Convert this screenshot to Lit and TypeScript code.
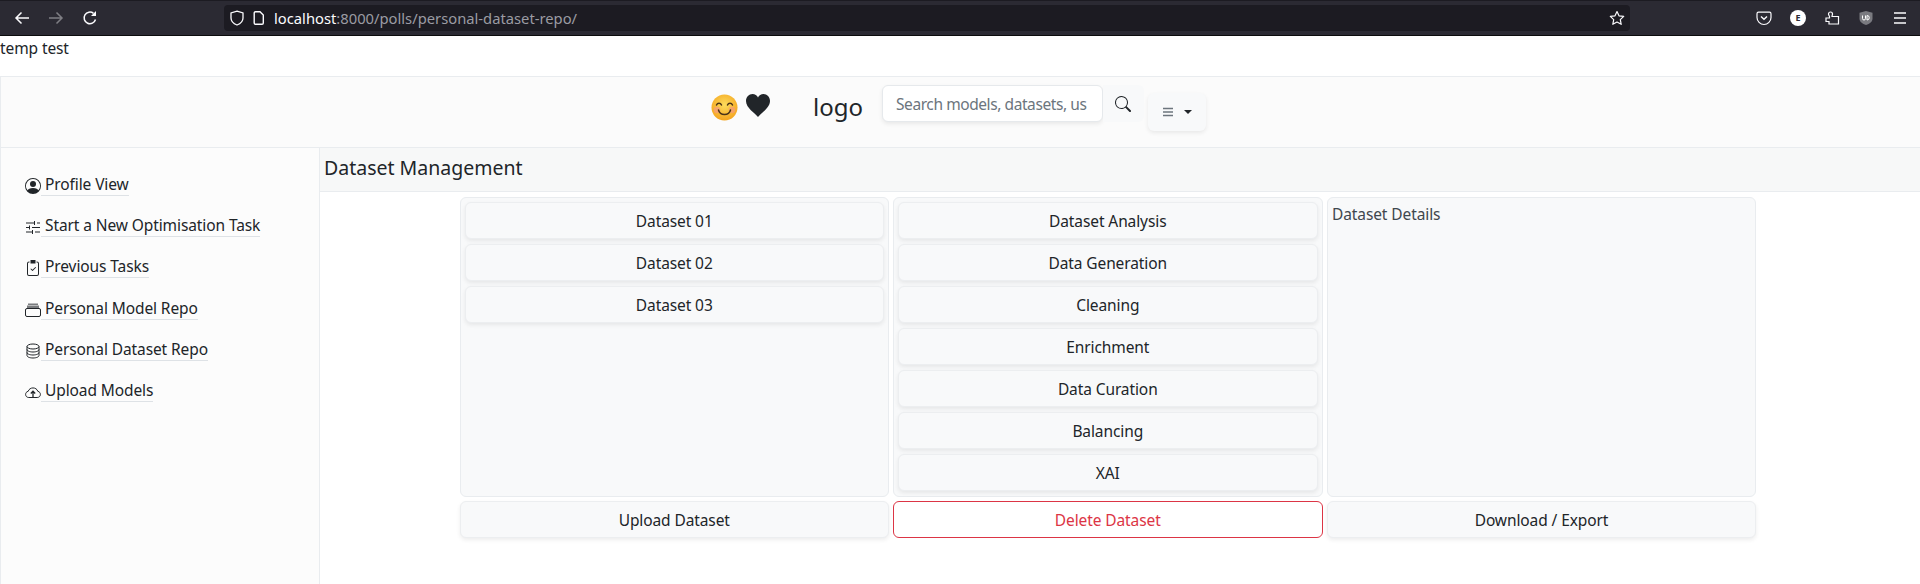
import { LitElement, html, css, svg } from "lit";
import { customElement } from "lit/decorators.js";

const navItems = [
  { label: "Profile View", icon: svg`<path d="M11 6a3 3 0 1 1-6 0 3 3 0 0 1 6 0z"/><path fill-rule="evenodd" d="M0 8a8 8 0 1 1 16 0A8 8 0 0 1 0 8zm8-7a7 7 0 0 0-5.468 11.37C3.242 11.226 4.805 10 8 10s4.757 1.225 5.468 2.37A7 7 0 0 0 8 1z"/>` },
  { label: "Start a New Optimisation Task", icon: svg`<path d="M1 4h8M12 4h3M1 8.500h3M7 8.500h8M1 13h6M10 13h5" stroke="currentColor" fill="none"/><path d="M9.500 2v4M4.500 6.500v4M7.500 11v4" stroke="currentColor" fill="none"/>` },
  { label: "Previous Tasks", icon: svg`<path fill-rule="evenodd" d="M10.854 7.146a.5.5 0 0 1 0 .708l-3 3a.5.5 0 0 1-.708 0l-1.500-1.500a.5.5 0 1 1 .708-.708L7.500 9.793l2.646-2.647a.5.5 0 0 1 .708 0z"/><path d="M4.500 1.500H4a2 2 0 0 0-2 2V14a2 2 0 0 0 2 2h8a2 2 0 0 0 2-2V3.500a2 2 0 0 0-2-2h-.5v1h.5a1 1 0 0 1 1 1V14a1 1 0 0 1-1 1H4a1 1 0 0 1-1-1V3.500a1 1 0 0 1 1-1h.5z"/><path d="M5.500 0h5v3.500h-5z"/>` },
  { label: "Personal Model Repo", icon: svg`<path opacity=".6" d="M3 1.500h10v1.500H3zM2 3.500h12V6H2z"/><path d="M.5 8a1.500 1.500 0 0 1 1.500-1.500h12A1.500 1.500 0 0 1 15.500 8v5a1.500 1.500 0 0 1-1.500 1.500H2A1.500 1.500 0 0 1 .5 13z" fill="none" stroke="currentColor"/>` },
  { label: "Personal Dataset Repo", icon: svg`<g fill="none" stroke="currentColor"><ellipse cx="8" cy="3.500" rx="6" ry="2.500"/><path d="M2 3.500v9c0 1.400 2.700 2.500 6 2.500s6-1.100 6-2.500v-9M2 6.500c0 1.400 2.700 2.500 6 2.500s6-1.100 6-2.500M2 9.500c0 1.400 2.700 2.500 6 2.500s6-1.100 6-2.500"/></g>` },
  { label: "Upload Models", icon: svg`<path d="M3.800 13.500C-.2 13.500-.5 8 3.200 7.300 4.500 2.800 11.500 2.800 12.800 7.300 16.500 8 16.200 13.500 12.200 13.500z" fill="none" stroke="currentColor"/><path d="M8 13V7.500M5.800 9.500 8 7.200l2.200 2.300" fill="none" stroke="currentColor" stroke-width="1.300"/>` },
];

const datasets = ["Dataset 01", "Dataset 02", "Dataset 03"];
const actions = ["Dataset Analysis", "Data Generation", "Cleaning", "Enrichment", "Data Curation", "Balancing", "XAI"];

@customElement("app-root")
export class AppRoot extends LitElement {
  static styles = css`
    :host {
      display: flex;
      flex-direction: column;
      height: 584px;
      overflow: hidden;
      background: #fff;
      color: #212529;
      font-family: "Noto Sans", "Open Sans", sans-serif;
      font-size: 15.500px;
      letter-spacing: -0.1px;
    }
    .chrome {
      display: flex;
      align-items: center;
      height: 36px;
      box-sizing: border-box;
      flex: none;
      background: #2b2a33;
      border-top: 1px solid #1c1b22;
      border-bottom: 1px solid #0c0c0d;
      color: #fbfbfe;
    }
    .chrome svg { display: block; flex: none; }
    .nav-btns { display: flex; align-items: center; gap: 18px; width: 224px; padding-left: 14px; box-sizing: border-box; }
    .dim { opacity: 0.4; }
    .urlbar {
      width: 1406px;
      height: 26px;
      display: flex;
      align-items: center;
      background: #1c1b22;
      border-radius: 4px;
      padding: 0 5px 0 5px;
      box-sizing: border-box;
      gap: 7px;
    }
    .url { flex: 1; font-size: 14.750px; letter-spacing: 0; margin-left: 1px; color: #9b9ba3; white-space: nowrap; }
    .url b { font-weight: 400; color: #fbfbfe; }
    .tools { display: flex; align-items: center; gap: 18px; padding-left: 126px; }
    .ext-e {
      width: 16px; height: 16px; border-radius: 50%; background: #fff; color: #2b2a33;
      font: 700 9px/16px "Noto Sans", sans-serif; text-align: center; letter-spacing: 0;
    }
    .temp { flex: none; height: 40px; line-height: 25px; font-size: 15.500px; }
    .topnav {
      flex: none;
      height: 72px;
      box-sizing: border-box;
      border-top: 1px solid #e9ecef;
      border-left: 1px solid #e9ecef;
      border-bottom: 1px solid #e9ecef;
      background: #fbfbfb;
      display: flex;
      align-items: flex-start;
      padding: 8px 0 0 710px;
    }
    .emoji { display: flex; align-items: flex-start; gap: 8px; height: 36px; margin-top: 9px; width: 102px; }
    .logo { font-size: 24px; width: 69px; line-height: 36px; letter-spacing: 0; margin-top: 4px; }
    .search { display: flex; height: 37px; }
    .search-input {
      width: 221px;
      box-sizing: border-box;
      border: 1px solid #e6e9ec;
      border-radius: 6px;
      background: #fff;
      box-shadow: 0 2px 4px rgba(0, 0, 0, 0.075);
      padding: 0 12px 0 13px;
      line-height: 36px;
      color: #6c757d;
      overflow: hidden;
      white-space: nowrap;
    }
    .search-input span { display: block; overflow: hidden; letter-spacing: -0.42px; }
    .search-btn {
      width: 41px;
      background: #f8f9fa;
      border-radius: 0 6px 6px 0;
      display: flex;
      align-items: center;
      justify-content: center;
      padding-right: 2px;
      box-sizing: border-box;
    }
    .menu-btn {
      width: 58px;
      height: 38px;
      margin: 8px 0 0 4px;
      background: #f8f9fa;
      border-radius: 6px;
      box-shadow: 0 2px 4px rgba(0, 0, 0, 0.075);
      display: flex;
      align-items: center;
      justify-content: center;
      gap: 10px;
      color: #6c757d;
    }
    .caret { width: 0; height: 0; border: 4.500px solid transparent; border-top-color: #212529; border-bottom: 0; }
    .body { flex: 1; display: flex; min-height: 0; }
    .side {
      width: 320px;
      flex: none;
      box-sizing: border-box;
      border-left: 1px solid #e9ecef;
      border-right: 1px solid #e9ecef;
      background: #fcfcfc;
      padding: 17px 0 0 24px;
    }
    .item { display: flex; align-items: center; height: 41.200px; }
    .item svg { width: 16px; height: 16px; flex: none; color: #212529; fill: currentColor; margin-top: 1px; }
    .item a {
      padding-left: 4px;
      line-height: 21px;
      border-bottom: 1px solid #dee2e6;
      margin-top: -1px;
    }
    .main { flex: 1; min-width: 0; }
    .band {
      height: 44px;
      box-sizing: border-box;
      background: #f7f8f8;
      border-bottom: 1px solid #e9ecef;
      padding-left: 4px;
      font-size: 19.500px;
      line-height: 39px;
      letter-spacing: 0;
    }
    .grid {
      display: grid;
      grid-template-columns: 428.500px 429.500px 429px;
      grid-template-rows: 300px 37px;
      column-gap: 4.500px;
      row-gap: 4px;
      padding: 5px 0 0 140px;
    }
    .panel {
      background: #f8f9fa;
      border: 1px solid #e9ecef;
      border-radius: 6px;
      box-sizing: border-box;
      padding: 4px;
      display: flex;
      flex-direction: column;
      gap: 5px;
    }
    .details { padding: 4px; line-height: 24px; color: #3f474e; }
    .btn {
      height: 37px;
      flex: none;
      box-sizing: border-box;
      background: #f8f9fa;
      border: 1px solid #eceef0;
      border-radius: 6px;
      box-shadow: 0 2px 4px rgba(0, 0, 0, 0.075);
      display: flex;
      align-items: center;
      justify-content: center;
    }
    .danger { background: #fff; border-color: #dc3545; color: #dc3545; box-shadow: none; }
  `;

  render() {
    return html`
      <div class="chrome">
        <div class="nav-btns">
          <svg width="16" height="16" viewBox="0 0 16 16" fill="none" stroke="currentColor" stroke-width="1.500"><path d="M15 8H2M7.500 2.500 2 8l5.500 5.500"/></svg>
          <svg class="dim" width="16" height="16" viewBox="0 0 16 16" fill="none" stroke="currentColor" stroke-width="1.500"><path d="M1 8h13M8.500 2.500 14 8l-5.500 5.500"/></svg>
          <svg width="16" height="16" viewBox="0 0 16 16" fill="none" stroke="currentColor" stroke-width="1.500"><path d="M13.500 9.500A5.800 5.800 0 1 1 11.500 3.300"/><path d="M14 1v5H9z" fill="currentColor" stroke="none"/></svg>
        </div>
        <div class="urlbar">
          <svg width="16" height="16" viewBox="0 0 16 16" fill="none" stroke="currentColor" stroke-width="1.300"><path d="M8 1.200 14 3v5c0 3.500-2.600 5.700-6 7-3.400-1.300-6-3.500-6-7V3z"/></svg>
          <svg width="14" height="16" viewBox="0 0 14 16" fill="none" stroke="currentColor" stroke-width="1.400"><path d="M3.500 1.700h4.500l3.300 3.300v8a1.300 1.300 0 0 1-1.300 1.300H3.500A1.300 1.300 0 0 1 2.200 13V3a1.300 1.300 0 0 1 1.300-1.300z"/></svg>
          <div class="url"><b>localhost</b>:8000/polls/personal-dataset-repo/</div>
          <svg width="16" height="16" viewBox="0 0 16 16" fill="none" stroke="currentColor" stroke-width="1.200"><path d="M8 1.500l2 4.300 4.700.6-3.400 3.200.9 4.700L8 12l-4.200 2.300.9-4.700L1.300 6.400 6 5.800z" stroke-linejoin="round"/></svg>
        </div>
        <div class="tools">
          <svg width="16" height="16" viewBox="0 0 16 16" fill="none" stroke="currentColor" stroke-width="1.200"><path d="M2.500 2.200h11a1.500 1.500 0 0 1 1.500 1.500v3.800a7 7 0 0 1-14 0V3.700a1.500 1.500 0 0 1 1.500-1.500z"/><path d="M5 6.500 8 9.300l3-2.800" stroke-width="1.400"/></svg>
          <div class="ext-e">E</div>
          <svg width="16" height="16" viewBox="0 0 16 16" fill="none" stroke="currentColor" stroke-width="1.200"><path d="M2 9h3.500V7.500C5.500 6.500 4.500 6.500 4.500 5A2 2 0 0 1 8.500 5C8.500 6 8 6.500 8 7.500h6.500V15H5v-2.500H2z" transform="translate(0 -1)"/></svg>
          <svg width="16" height="16" viewBox="0 0 16 16"><path d="M8 1l6.500 1.800v6c0 3-2.800 5.100-6.500 6.200-3.700-1.100-6.500-3.200-6.500-6.200v-6z" fill="#7a7a80"/><path d="M4.500 5.500v3a1.500 1.500 0 0 0 3 0v-3M9 5.500v4.500a2.200 2.200 0 0 0 0-4.500z" fill="none" stroke="#fff"/></svg>
          <svg width="16" height="16" viewBox="0 0 16 16" fill="none" stroke="currentColor" stroke-width="1.300"><path d="M2 3h12M2 8h12M2 13h12"/></svg>
        </div>
      </div>
      <div class="temp">temp test</div>
      <div class="topnav">
        <div class="emoji">
          <svg width="27" height="27" viewBox="0 0 27 27"><defs><radialGradient id="fc" cx="50%" cy="40%" r="60%"><stop offset="0" stop-color="#fddc5c"/><stop offset="1" stop-color="#f4a51f"/></radialGradient></defs><circle cx="13.500" cy="13.500" r="13" fill="url(#fc)"/><circle cx="6" cy="16" r="3.200" fill="#f59a7d" opacity=".7"/><circle cx="21" cy="16" r="3.200" fill="#f59a7d" opacity=".7"/><path d="M5.500 11c1-2.500 4-2.500 5 0M16.500 11c1-2.500 4-2.500 5 0" fill="none" stroke="#4b3418" stroke-width="1.500" stroke-linecap="round"/><path d="M7.500 16c1.500 6 10.500 6 12 0" fill="none" stroke="#4b3418" stroke-width="1.500" stroke-linecap="round"/></svg>
          <svg width="24" height="23" viewBox="0 0 24 23"><path fill="#212529" d="M12 23C9 19 0 14 0 7 0 3 3 0 6.500 0 9 0 11 1.300 12 3.500 13 1.300 15 0 17.500 0 21 0 24 3 24 7c0 7-9 12-12 16z"/></svg>
        </div>
        <div class="logo">logo</div>
        <div class="search">
          <div class="search-input"><span>Search models, datasets, us</span></div>
          <div class="search-btn"><svg width="16" height="16" viewBox="0 0 16 16" fill="#212529"><path d="M11.742 10.344a6.500 6.500 0 1 0-1.397 1.398h-.001c.03.04.062.078.098.115l3.850 3.850a1 1 0 0 0 1.415-1.414l-3.850-3.850a1.007 1.007 0 0 0-.115-.100zM12 6.500a5.500 5.500 0 1 1-11 0 5.500 5.500 0 0 1 11 0z"/></svg></div>
        </div>
        <div class="menu-btn">
          <svg width="12" height="12" viewBox="0 0 12 12" stroke="currentColor" stroke-width="1.500"><path d="M1 2.500h10M1 6h10M1 9.500h10"/></svg>
          <span class="caret"></span>
        </div>
      </div>
      <div class="body">
        <div class="side">
          ${navItems.map((n) => html`<div class="item"><svg viewBox="0 0 16 16">${n.icon}</svg><a>${n.label}</a></div>`)}
        </div>
        <div class="main">
          <div class="band">Dataset Management</div>
          <div class="grid">
            <div class="panel">${datasets.map((d) => html`<div class="btn">${d}</div>`)}</div>
            <div class="panel">${actions.map((d) => html`<div class="btn">${d}</div>`)}</div>
            <div class="panel details">Dataset Details</div>
            <div class="btn">Upload Dataset</div>
            <div class="btn danger">Delete Dataset</div>
            <div class="btn">Download / Export</div>
          </div>
        </div>
      </div>
    `;
  }
}
